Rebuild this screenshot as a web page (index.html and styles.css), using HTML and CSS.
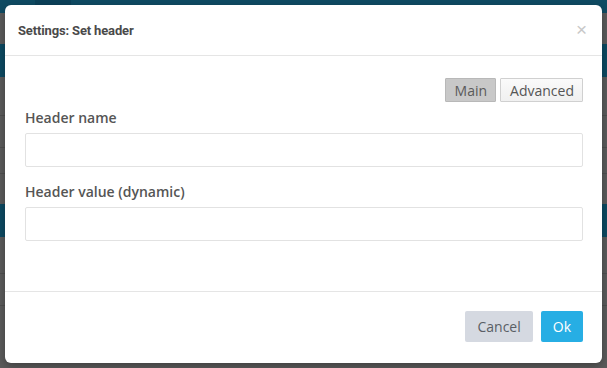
FILE: index.html
```html
<!DOCTYPE html>
<html lang="en">
<head>
    <meta charset="UTF-8">
    <meta name="viewport" content="width=device-width, initial-scale=1.0">
    <title>Settings: Set header</title>
    <link rel="stylesheet" href="styles.css">
</head>
<body>
    <div class="page">
        <div class="band band-top"><span class="top-block"></span></div>
        <div class="band gray h31"></div>
        <div class="band teal h33"></div>
        <div class="band gray h39 line"></div>
        <div class="band gray h32 line"></div>
        <div class="band gray h26 line"></div>
        <div class="band gray h30"></div>
        <div class="band teal h33"></div>
        <div class="band gray h37 line"></div>
        <div class="band gray h32 line"></div>
        <div class="band gray rest"></div>
    </div>

    <div class="modal">
        <div class="modal-header">
            <h4>Settings: Set header</h4>
            <span class="close">&times;</span>
        </div>

        <div class="modal-body">
            <div class="tabs">
                <button class="tab active">Main</button>
                <button class="tab">Advanced</button>
            </div>

            <div class="field">
                <label for="header-name">Header name</label>
                <input type="text" id="header-name">
            </div>

            <div class="field">
                <label for="header-value">Header value (dynamic)</label>
                <input type="text" id="header-value">
            </div>
        </div>

        <div class="modal-footer">
            <button class="btn btn-cancel">Cancel</button>
            <button class="btn btn-ok">Ok</button>
        </div>
    </div>
</body>
</html>
```

FILE: styles.css
```css
html, body {
    margin: 0;
    padding: 0;
    height: 100%;
    overflow: hidden;
}
body {
    font-family: "Open Sans", "Liberation Sans", sans-serif;
    background-color: #5a5a5a;
    color: #555;
}
.page {
    display: flex;
    flex-direction: column;
    height: 368px;
}
.band {
    flex: none;
}
.band-top {
    height: 13px;
    background-color: #0f4b63;
}
.top-block {
    display: block;
    width: 36px;
    height: 13px;
    margin-left: 35px;
    background-color: #0c4159;
}
.gray {
    background-color: #5b5b5b;
}
.teal {
    background-color: #0d4a62;
}
.line {
    border-bottom: 1px solid #4f4f4f;
}
.h26 { height: 25px; }
.h30 { height: 30px; }
.h31 { height: 31px; }
.h32 { height: 31px; }
.h33 { height: 33px; }
.h37 { height: 36px; }
.h39 { height: 38px; }
.rest { flex: 1; }

/* dialog */
.modal {
    position: absolute;
    top: 5px;
    left: 5px;
    width: 597px;
    height: 358px;
    background-color: #fff;
    border-radius: 6px;
    box-shadow: 0 3px 9px rgba(0,0,0,0.3);
    display: flex;
    flex-direction: column;
}
.modal-header {
    height: 50px;
    padding: 0 15px 0 13px;
    border-bottom: 1px solid #e5e5e5;
    display: flex;
    align-items: center;
    justify-content: space-between;
}
.modal-header h4 {
    margin: 0;
    font-family: Roboto, "Liberation Sans", sans-serif;
    font-size: 13px;
    font-weight: bold;
    letter-spacing: -0.15px;
    color: #4a4a4a;
    padding-top: 1px;
}
.close {
    font-family: "Liberation Sans", Arial, sans-serif;
    font-size: 19px;
    color: #c8c8c8;
    line-height: 1;
    margin-top: -2px;
}
.modal-body {
    flex: 1;
    padding: 22px 19px 0 20px;
}
.tabs {
    display: flex;
    justify-content: flex-end;
    gap: 4px;
}
.tab {
    font-family: "Open Sans", sans-serif;
    font-size: 14px;
    color: #555;
    height: 24px;
    padding: 0 8px 0 9px;
    background: linear-gradient(#fafafa, #f0f0f0);
    border: 1px solid #d0d0d0;
    border-radius: 1px;
    cursor: pointer;
}
.tab.active {
    background: #c8c8c8;
    border-color: #b8b8b8;
    color: #5a5a5a;
}
.field {
    margin-top: 6px;
}
.field + .field {
    margin-top: 15px;
}
.field label {
    display: block;
    font-size: 14px;
    font-weight: 600;
    color: #555;
    margin-bottom: 5px;
    line-height: 20px;
}
.field input {
    display: block;
    box-sizing: border-box;
    width: 100%;
    height: 34px;
    border: 1px solid #e2e2e2;
    border-radius: 2px;
    background: #fff;
    margin: 0;
}
.modal-footer {
    height: 72px;
    box-sizing: border-box;
    border-top: 1px solid #e5e5e5;
    padding: 19px 19px 0 0;
    display: flex;
    justify-content: flex-end;
    align-items: flex-start;
    gap: 8px;
}
.btn {
    font-family: "Open Sans", sans-serif;
    font-size: 14px;
    height: 31px;
    border: none;
    border-radius: 2px;
    padding: 0 12px;
    cursor: pointer;
}
.btn-cancel {
    background-color: #d5d9e1;
    color: #5a5f66;
}
.btn-ok {
    background-color: #27aee4;
    color: #fff;
    padding: 0 12px;
}
```
